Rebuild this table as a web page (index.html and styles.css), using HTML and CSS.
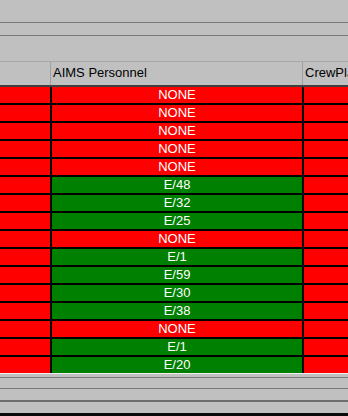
FILE: index.html
```html
<!DOCTYPE html>
<html>
<head>
<meta charset="utf-8">
<link rel="stylesheet" href="styles.css">
</head>
<body>
<div class="window">
  <div class="band band-top"></div>
  <div class="band band-mid"></div>
  <div class="band band-tools"></div>
  <div class="head">
    <div class="hcell hcell-first"></div>
    <div class="hcell">AIMS Personnel</div>
    <div class="hcell hcell-last">CrewPla</div>
  </div>
  <div class="grid">
    <div class="c bad"></div><div class="c bad">NONE</div><div class="c bad"></div>
    <div class="c bad"></div><div class="c bad">NONE</div><div class="c bad"></div>
    <div class="c bad"></div><div class="c bad">NONE</div><div class="c bad"></div>
    <div class="c bad"></div><div class="c bad">NONE</div><div class="c bad"></div>
    <div class="c bad"></div><div class="c bad">NONE</div><div class="c bad"></div>
    <div class="c bad"></div><div class="c ok">E/48</div><div class="c bad"></div>
    <div class="c bad"></div><div class="c ok">E/32</div><div class="c bad"></div>
    <div class="c bad"></div><div class="c ok">E/25</div><div class="c bad"></div>
    <div class="c bad"></div><div class="c bad">NONE</div><div class="c bad"></div>
    <div class="c bad"></div><div class="c ok">E/1</div><div class="c bad"></div>
    <div class="c bad"></div><div class="c ok">E/59</div><div class="c bad"></div>
    <div class="c bad"></div><div class="c ok">E/30</div><div class="c bad"></div>
    <div class="c bad"></div><div class="c ok">E/38</div><div class="c bad"></div>
    <div class="c bad"></div><div class="c bad">NONE</div><div class="c bad"></div>
    <div class="c bad"></div><div class="c ok">E/1</div><div class="c bad"></div>
    <div class="c bad"></div><div class="c ok">E/20</div><div class="c bad"></div>
  </div>
  <div class="foot">
    <div class="fband fband-1"></div>
    <div class="fband fband-2"></div>
    <div class="fband fband-3"></div>
    <div class="fband fband-4"></div>
  </div>
</div>
</body>
</html>
```
FILE: styles.css
```css
html, body {
  margin: 0;
  padding: 0;
  background: #c0c0c0;
}

.window {
  width: 348px;
  height: 416px;
  overflow: hidden;
  display: flex;
  flex-direction: column;
  background: #c0c0c0;
  font-family: "Liberation Sans", Arial, sans-serif;
  font-size: 13px;
}

.band {
  background: #c0c0c0;
  flex: none;
}

.band-top {
  height: 22px;
  border-bottom: 1px solid #7a7a7a;
}

.band-mid {
  height: 12px;
  border-bottom: 1px solid #7a7a7a;
}

.band-tools {
  height: 25px;
  border-bottom: 1px solid #a8a8a8;
}

/* column header strip; the last caption runs past the window edge */
.head {
  flex: none;
  display: flex;
  height: 23px;
  border-bottom: 2px solid #404040;
  background: #c0c0c0;
}

.hcell {
  width: 249px;
  border-right: 1px solid #a0a0a0;
  padding: 3px 0 0 2px;
  color: #000;
  white-space: nowrap;
  overflow: hidden;
  box-sizing: content-box;
}

.hcell-first {
  width: 50px;
  padding: 0;
  border-right: 1px solid #a0a0a0;
}

.hcell-last {
  flex: 1;
  border-right: none;
}

/* black grid lines come from the container showing through the gaps */
.grid {
  flex: none;
  display: grid;
  grid-template-columns: 50px 250px 1fr;
  grid-auto-rows: 16px;
  gap: 2px;
  background: #000;
}

.c {
  color: #fff;
  text-align: center;
  line-height: 16px;
}

.bad {
  background: #ff0000;
}

.ok {
  background: #008000;
}

.foot {
  flex: 1;
  display: flex;
  flex-direction: column;
  border-top: 1px solid #f0f0f0;
  border-bottom: 3px solid #0a0a0a;
}

.fband {
  background: #c0c0c0;
}

.fband-1 {
  height: 3px;
  border-bottom: 1px solid #7a7a7a;
}

.fband-2 {
  height: 10px;
  border-bottom: 1px solid #7a7a7a;
}

.fband-3 {
  height: 11px;
  border-bottom: 2px solid #6e6e6e;
}

.fband-4 {
  flex: 1;
}
```
